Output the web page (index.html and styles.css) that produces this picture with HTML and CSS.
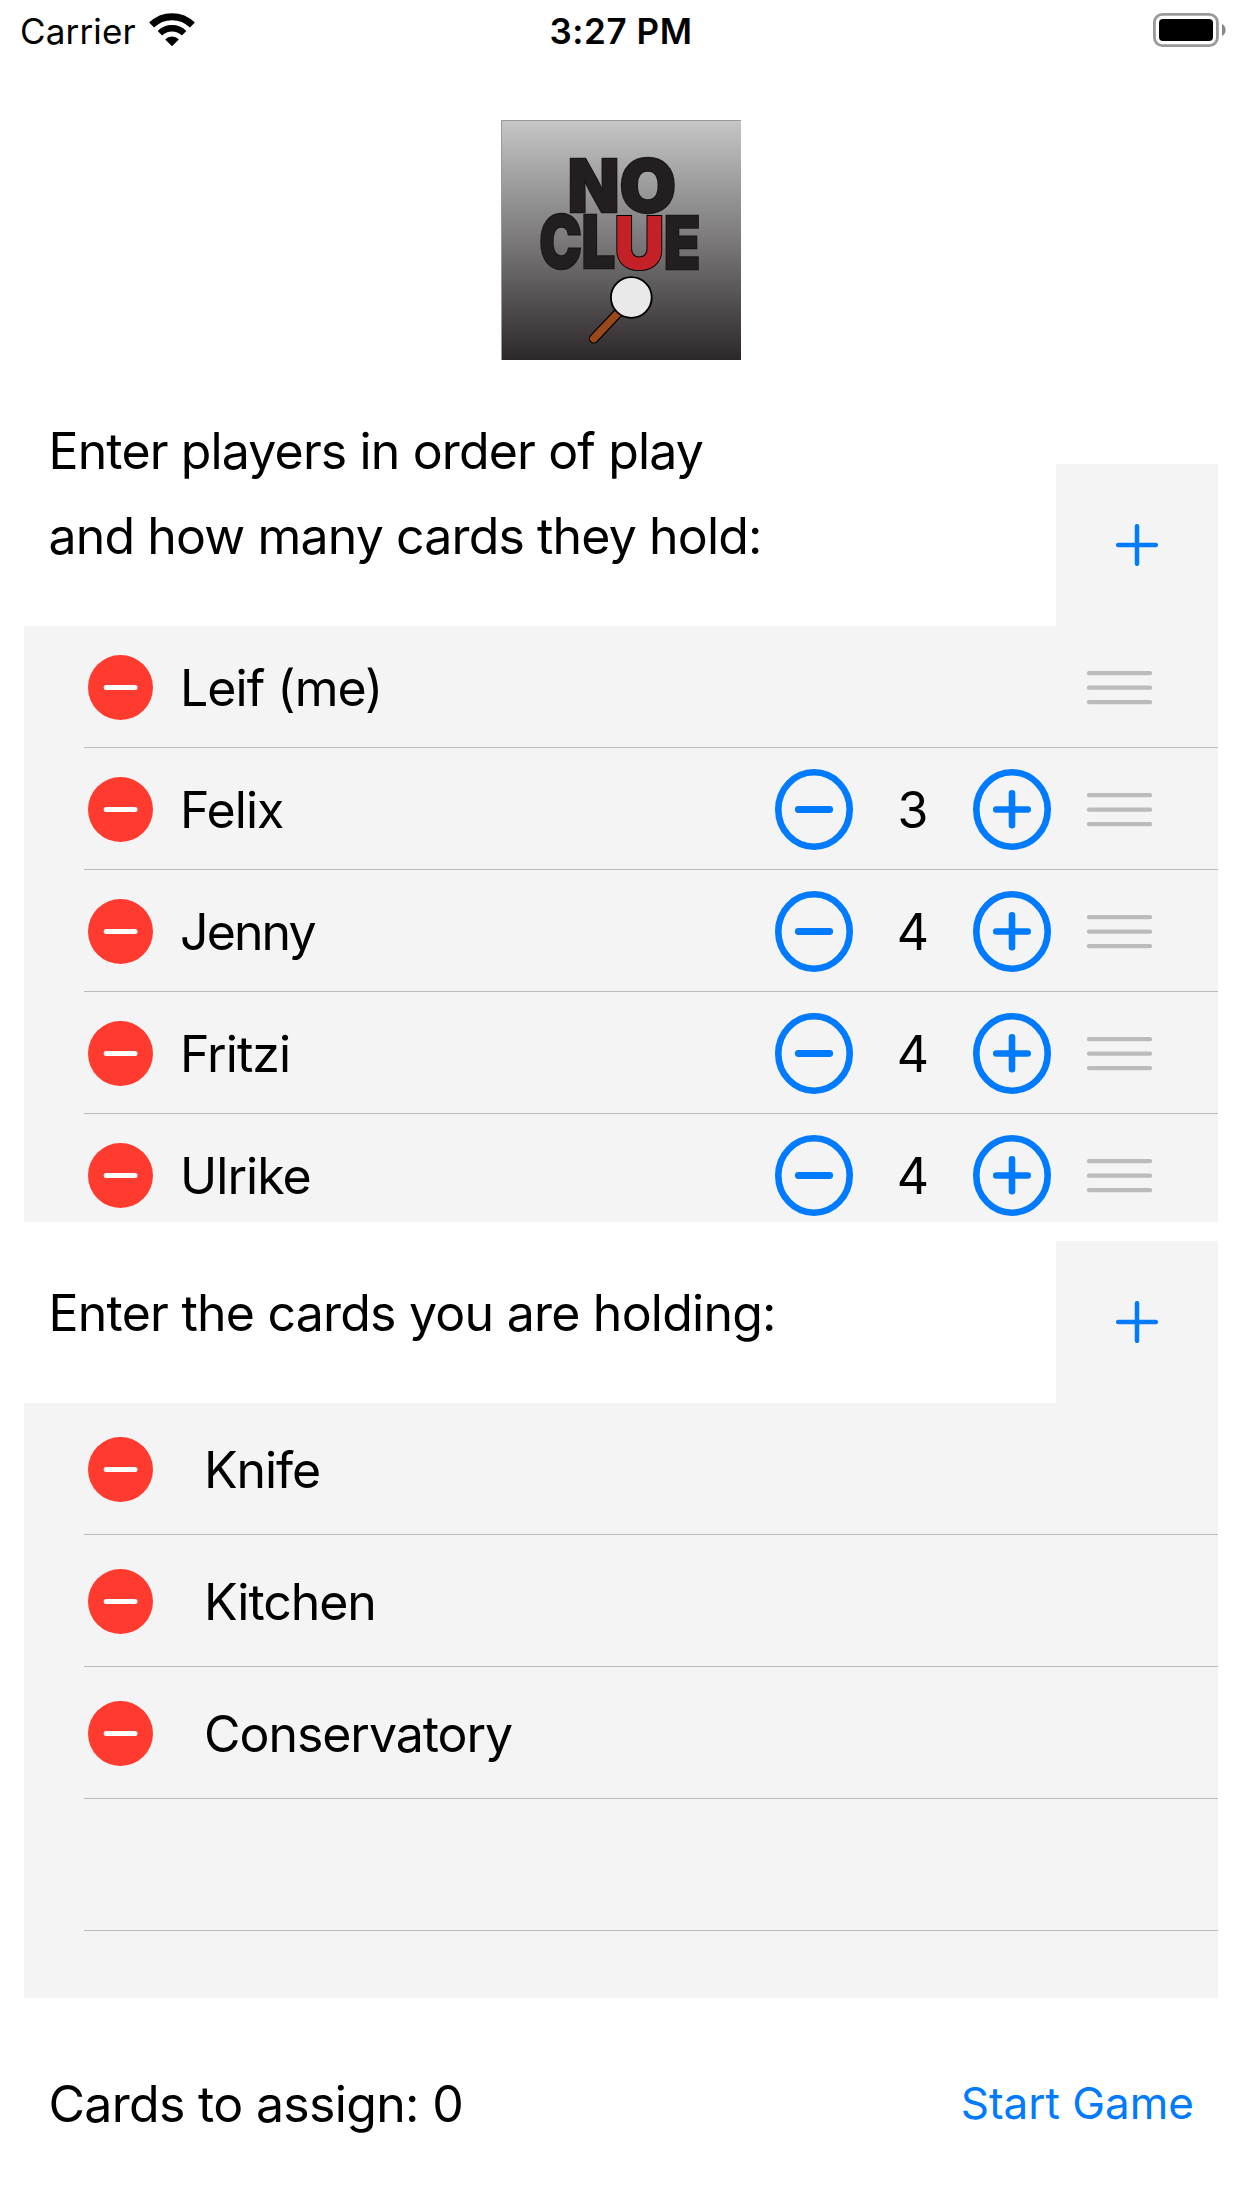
FILE: index.html
```html
<!DOCTYPE html>
<html lang="en">
<head>
<meta charset="utf-8">
<title>No Clue</title>
<link rel="stylesheet" href="styles.css">
</head>
<body>
<svg class="symbols" aria-hidden="true">
  <symbol id="delete" viewBox="0 0 65 65"><circle cx="32.5" cy="32.5" r="32.5" fill="#ff3b30"/><path d="M18.2 32.5H47" stroke="#fff" stroke-width="5" stroke-linecap="round"/></symbol>
  <symbol id="minus" viewBox="0 0 78 81"><ellipse cx="39" cy="40.5" rx="35.7" ry="37.2" fill="none" stroke="#007aff" stroke-width="6.6"/><path d="M23.3 40.5h31.4" stroke="#007aff" stroke-width="6.8" stroke-linecap="round"/></symbol>
  <symbol id="plus" viewBox="0 0 78 81"><ellipse cx="39" cy="40.5" rx="35.7" ry="37.2" fill="none" stroke="#007aff" stroke-width="6.6"/><path d="M23.3 40.5h31.4M39 24.3v32" stroke="#007aff" stroke-width="6.6" stroke-linecap="round"/></symbol>
  <symbol id="grip" viewBox="0 0 65 34"><path d="M2 2.2h61M2 16.7h61M2 31.2h61" stroke="#bbb" stroke-width="4.2" stroke-linecap="round"/></symbol>
  <symbol id="add" viewBox="0 0 42 42"><path d="M2.2 21h37.6M21 2.2v37.6" stroke="#007aff" stroke-width="4.5" stroke-linecap="round"/></symbol>
</svg>

<header class="status">
  <div class="status-left">
    <span class="carrier">Carrier</span>
    <svg class="wifi" viewBox="0 0 46 34"><g fill="none" stroke="#000"><path d="M2.6 12.1A29 29 0 0 1 43.4 12.1" stroke-width="7"/><path d="M10.9 20.2A17.4 17.4 0 0 1 35.1 20.2" stroke-width="6.4"/></g><path d="M16.2 26.4a9.7 9.7 0 0 1 13.6 0L23 33.3z"/></svg>
  </div>
  <span class="clock">3:27 PM</span>
  <svg class="battery" viewBox="0 0 74 34"><rect x="1.4" y="1.4" width="63" height="31.2" rx="8" fill="none" stroke="#999" stroke-width="2.8"/><rect x="6" y="6" width="54" height="22" rx="4"/><path d="M69 11a6.8 6.8 0 0 1 0 12z" fill="#888"/></svg>
</header>

<svg class="logo" viewBox="0 0 240 240" role="img" aria-label="No Clue">
  <defs><linearGradient id="shade" x1="0" y1="0" x2="0" y2="1"><stop offset="0" stop-color="#c6c6c6"/><stop offset=".5" stop-color="#7b797a"/><stop offset="1" stop-color="#2d282a"/></linearGradient></defs>
  <rect width="240" height="240" fill="url(#shade)"/>
  <path d="M.5 240V.5H240" fill="none" stroke="#999" stroke-width="1"/>
  <g class="letters">
    <text transform="translate(92.5 91.5) scale(.92 1)">N</text>
    <text transform="translate(146.8 91.5) scale(1 1)">O</text>
    <text transform="translate(59.5 148) scale(.78 1)">C</text>
    <text transform="translate(97.5 148) scale(.82 1)">L</text>
    <text class="accent" transform="translate(138.3 148.5) scale(.96 1)">U</text>
    <text transform="translate(181 148.5) scale(.82 1)">E</text>
  </g>
  <path d="M117 193L92.8 218.6" stroke="#000" stroke-width="10" stroke-linecap="round"/>
  <path d="M117 193L92.8 218.6" stroke="#9b481b" stroke-width="7.6" stroke-linecap="round"/>
  <circle cx="130.3" cy="177.5" r="20.4" fill="#e9e9e9" stroke="#000" stroke-width="1.9"/>
</svg>

<main>
  <section class="block players">
    <div class="heading">
      <h1>Enter players in order of play<br>and how many cards they hold:</h1>
      <button class="add" aria-label="Add player"><svg><use href="#add"/></svg></button>
    </div>
    <ul class="list">
      <li><svg class="delete"><use href="#delete"/></svg><span class="name">Leif (me)</span><svg class="grip"><use href="#grip"/></svg></li>
      <li><svg class="delete"><use href="#delete"/></svg><span class="name">Felix</span><svg class="step"><use href="#minus"/></svg><span class="count">3</span><svg class="step"><use href="#plus"/></svg><svg class="grip"><use href="#grip"/></svg></li>
      <li><svg class="delete"><use href="#delete"/></svg><span class="name tight">Jenny</span><svg class="step"><use href="#minus"/></svg><span class="count">4</span><svg class="step"><use href="#plus"/></svg><svg class="grip"><use href="#grip"/></svg></li>
      <li><svg class="delete"><use href="#delete"/></svg><span class="name">Fritzi</span><svg class="step"><use href="#minus"/></svg><span class="count">4</span><svg class="step"><use href="#plus"/></svg><svg class="grip"><use href="#grip"/></svg></li>
      <li><svg class="delete"><use href="#delete"/></svg><span class="name">Ulrike</span><svg class="step"><use href="#minus"/></svg><span class="count">4</span><svg class="step"><use href="#plus"/></svg><svg class="grip"><use href="#grip"/></svg></li>
    </ul>
  </section>

  <section class="block cards">
    <div class="heading">
      <h1>Enter the cards you are holding:</h1>
      <button class="add" aria-label="Add card"><svg><use href="#add"/></svg></button>
    </div>
    <ul class="list">
      <li><svg class="delete"><use href="#delete"/></svg><span class="name">Knife</span></li>
      <li><svg class="delete"><use href="#delete"/></svg><span class="name">Kitchen</span></li>
      <li><svg class="delete"><use href="#delete"/></svg><span class="name">Conservatory</span></li>
      <li></li>
      <li></li>
    </ul>
  </section>
</main>

<footer class="footer">
  <span class="remaining">Cards to assign: 0</span>
  <button class="start">Start Game</button>
</footer>
</body>
</html>
```
FILE: styles.css
```css
* { box-sizing: border-box; }
body { margin: 0; width: 1242px; height: 2208px; overflow: hidden; background: #fff; color: #000; font-family: Inter, "Liberation Sans", sans-serif; font-size: 50px; display: flex; flex-direction: column; }
svg { display: block; flex: none; }
button { border: 0; padding: 0; background: none; font: inherit; }
.symbols { position: absolute; width: 0; height: 0; }

.status { height: 60px; display: grid; grid-template-columns: 1fr auto 1fr; padding: 0 16px; font-size: 35px; line-height: 62px; }
.status-left { display: flex; padding-left: 4px; }
.carrier { width: 129px; white-space: nowrap; letter-spacing: .15px; }
.wifi { width: 46px; height: 34px; margin-top: 13px; }
.clock { font-weight: 600; letter-spacing: .55px; }
.battery { width: 74px; height: 34px; margin-top: 13px; justify-self: end; margin-right: -1px; }

.logo { width: 240px; height: 240px; margin: 60px 0 0 501px; }
.letters { font-size: 73px; font-weight: 900; text-anchor: middle; fill: #231f20; stroke: #1a1718; stroke-width: 2.4px; paint-order: stroke; }
.letters .accent { fill: #c32127; stroke: #000; stroke-width: 2px; }

.block { margin: 0 24px; }
.heading { display: flex; justify-content: space-between; align-items: flex-end; }
h1 { margin: 0 0 0 24.5px; font-size: 50px; font-weight: 400; line-height: 85px; letter-spacing: -.86px; white-space: nowrap; }
.add { width: 162px; height: 162px; background: #f4f4f4; display: grid; place-items: center; }
.add svg { width: 42px; height: 42px; }
.list { list-style: none; margin: 0; padding: 0 0 0 60px; background: #f4f4f4; overflow: hidden; }
.list li { display: flex; align-items: center; padding-left: 4px; border-bottom: 1px solid #bcbcbc; }
.delete { width: 65px; height: 65px; }
.name { flex: 1; line-height: 60px; letter-spacing: -.95px; }
.name.tight { letter-spacing: -1.9px; }
.grip { width: 65px; height: 34px; margin: 0 66px 0 36px; }
.step { width: 78px; height: 81px; }
.count { width: 120px; text-align: center; line-height: 60px; }

.players { margin-top: 33px; }
.players .heading { height: 233px; }
.players h1 { margin-bottom: 47px; }
.players .list { height: 596px; }
.players li { height: 122px; padding-top: 2px; }
.players .name { padding-left: 27px; }

.cards { margin-top: 19px; }
.cards h1 { margin-bottom: 47px; letter-spacing: -.77px; }
.cards .list { height: 595px; }
.cards li { height: 132px; padding-top: 2px; }
.cards .name { padding-left: 51px; letter-spacing: -1.05px; }

.footer { display: flex; justify-content: space-between; align-items: flex-start; margin: 64px 48px 0; line-height: 84px; }
.remaining { letter-spacing: -.68px; padding-left: .5px; }
.start { color: #007aff; font-size: 44px; line-height: 82px; }
```
